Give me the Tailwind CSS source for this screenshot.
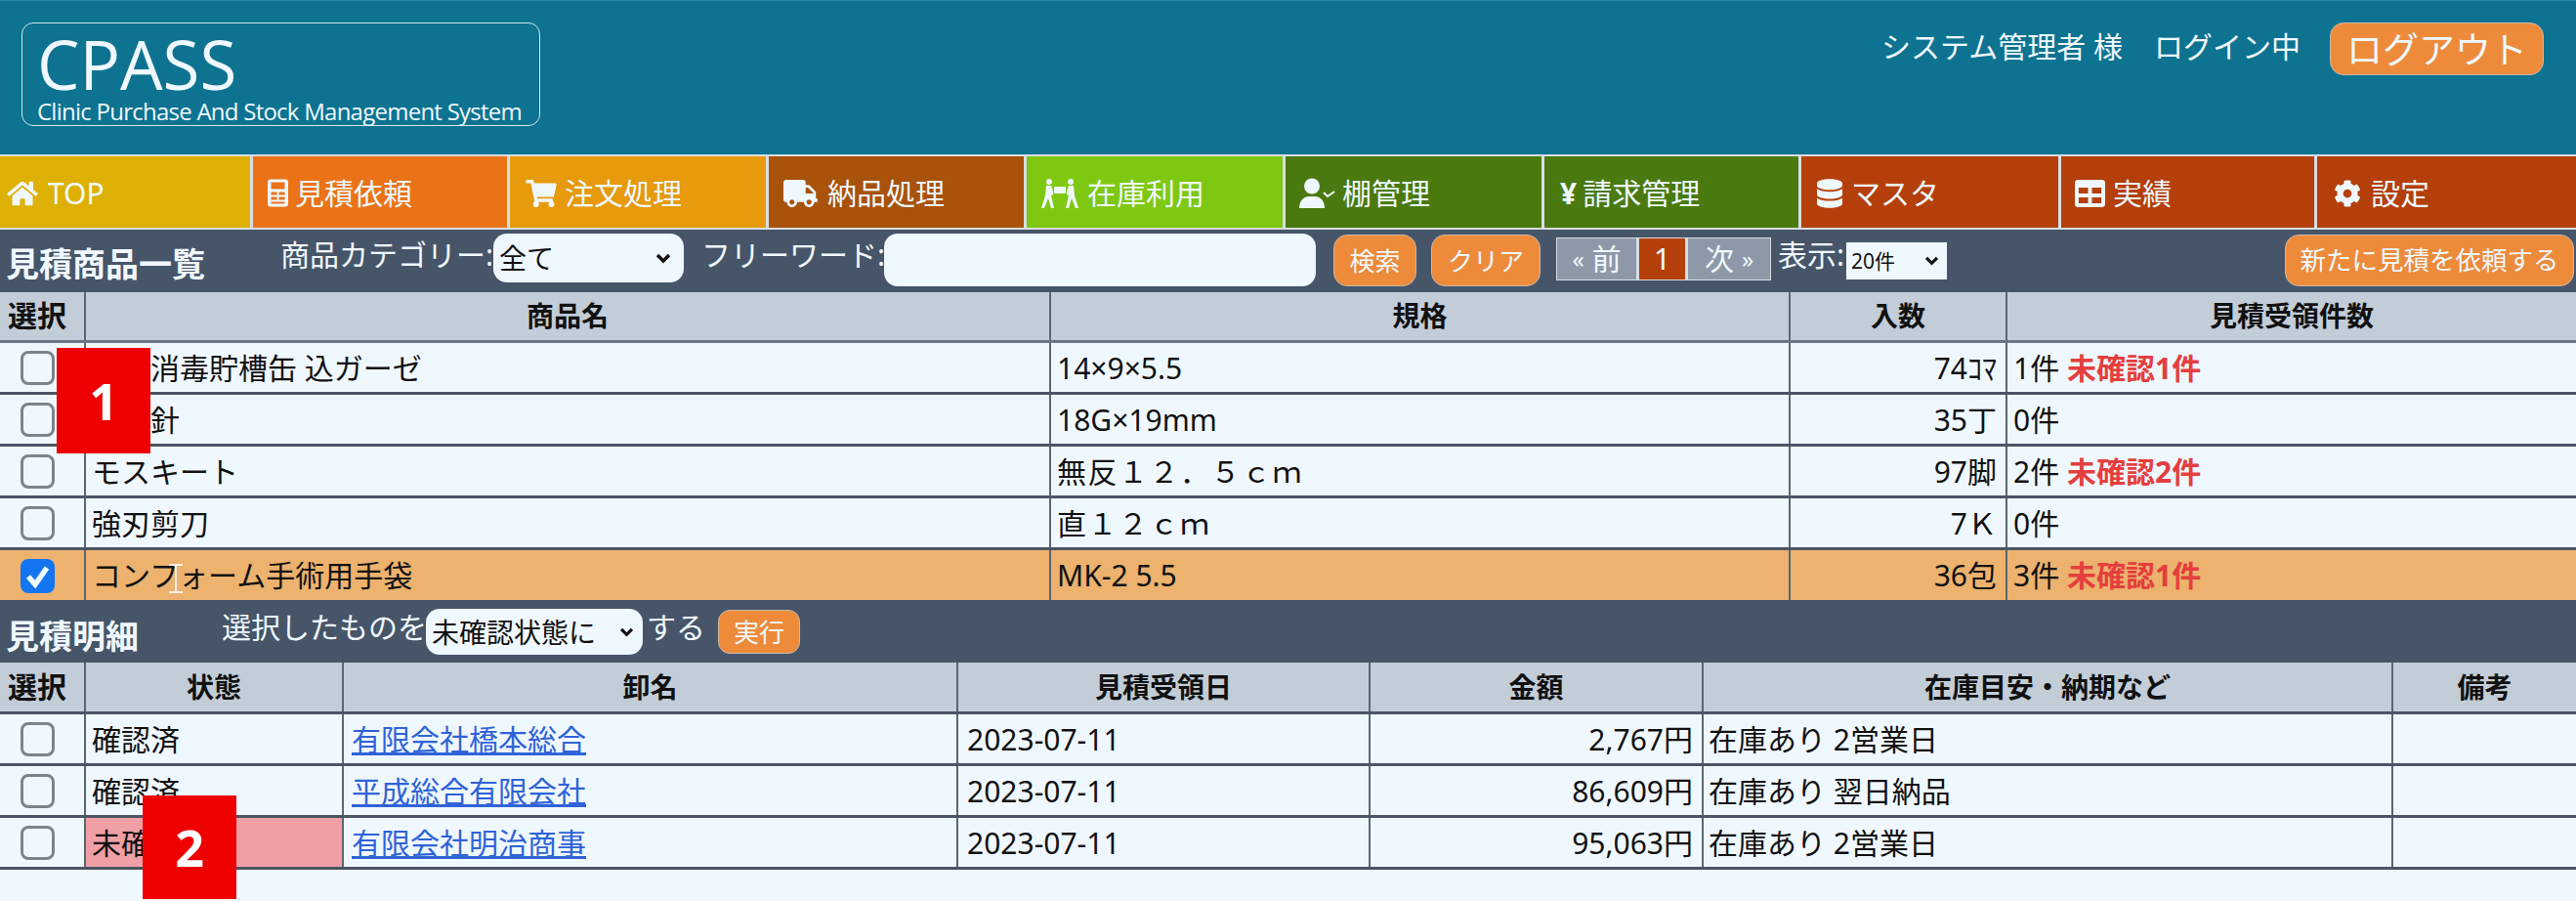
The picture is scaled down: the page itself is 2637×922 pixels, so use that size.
<!DOCTYPE html>
<html lang="ja">
<head>
  <meta charset="UTF-8" />
  <title>CPASS 見積商品一覧</title>
  <meta name="viewport" content="width=device-width, initial-scale=1.0" />
  <script src="https://cdn.jsdelivr.net/npm/@tailwindcss/browser@4"></script>
</head>
<body class="relative h-[922px] overflow-hidden bg-[#f0f8ff] text-[30px] leading-none text-[#111] font-['Noto_Sans','Noto_Sans_CJK_JP',sans-serif]">

  <!-- header -->
  <header class="flex h-[158px] items-start justify-between border-t border-[#2f8aa8] bg-[#0d7391] text-[#f0f8ff]">
    <div class="ml-[22px] mt-[22px] flex h-[106px] w-[531px] flex-col rounded-[12px] border border-[#d5e6ee] pl-[15px] font-['Open_Sans','Noto_Sans',sans-serif]">
      <div class="mt-[11px] h-[60px] text-[69px] leading-[60px]">CPASS</div>
      <div class="mt-[5px] text-[24px] leading-[28px] tracking-[-0.75px] whitespace-nowrap">Clinic Purchase And Stock Management System</div>
    </div>
    <div class="mt-[22px] mr-[33px] flex items-start">
      <span class="mt-[8px] text-[30px] leading-[34px] whitespace-nowrap">システム管理者 様</span>
      <span class="mt-[8px] ml-[32px] text-[30px] leading-[34px] whitespace-nowrap">ログイン中</span>
      <button class="ml-[30px] h-[54px] w-[219px] rounded-[14px] border border-[#c9b9a8] bg-[#ed8b3b] text-[37px] text-[#f0f8ff]">ログアウト</button>
    </div>
  </header>

  <!-- nav -->
  <nav class="flex h-[77px] gap-[3px] border-y-2 border-[#d8dde2] bg-[#d8dde2] text-[30px] text-[#f0f8ff] [&_a]:pt-[2px]">
    <a class="flex w-[256px] items-center gap-[10px] bg-[#deb004] pl-[7px]">
      <svg class="h-[28px] w-[32px]" viewBox="0 0 576 512" fill="currentColor"><path d="M280.37 148.26L96 300.11V464a16 16 0 0 0 16 16l112.06-.29a16 16 0 0 0 15.92-16V368a16 16 0 0 1 16-16h64a16 16 0 0 1 16 16v95.64a16 16 0 0 0 16 16.05L464 480a16 16 0 0 0 16-16V300L295.67 148.26a12.19 12.19 0 0 0-15.3 0zM571.6 251.47L488 182.56V44.05a12 12 0 0 0-12-12h-56a12 12 0 0 0-12 12v72.61L318.47 43a48 48 0 0 0-61 0L4.34 251.47a12 12 0 0 0-1.6 16.9l25.5 31A12 12 0 0 0 45.15 301l235.22-193.74a12.19 12.19 0 0 1 15.3 0L530.9 301a12 12 0 0 0 16.9-1.6l25.5-31a12 12 0 0 0-1.7-16.93z"/></svg>TOP</a>
    <a class="flex w-[260px] items-center gap-[7px] bg-[#ea7317] pl-[15px]">
      <svg class="h-[29px] w-[21px]" viewBox="0 0 21 28" fill="currentColor"><path fill-rule="evenodd" d="M3 0h15a3 3 0 0 1 3 3v22a3 3 0 0 1-3 3H3a3 3 0 0 1-3-3V3a3 3 0 0 1 3-3zM3.500 3v7h14V3zM3.500 13v3h6v-3zM11.500 13v3h6v-3zM3.500 18v3h6v-3zM11.500 18v3h6v-3zM3.500 23v2h14v-2z"/></svg>見積依頼</a>
    <a class="flex w-[262px] items-center gap-[8px] bg-[#e69a0c] pl-[16px]">
      <svg class="h-[28px] w-[32px]" viewBox="0 0 576 512" fill="currentColor"><path d="M528.12 301.319l47.273-208C578.806 78.301 567.391 64 551.99 64H159.208l-9.166-44.81C147.758 8.021 137.93 0 126.529 0H24C10.745 0 0 10.745 0 24v16c0 13.255 10.745 24 24 24h69.883l70.248 343.435C147.325 417.1 136 435.222 136 456c0 30.928 25.072 56 56 56s56-25.072 56-56c0-15.674-6.447-29.835-16.824-40h209.647C430.447 426.165 424 440.326 424 456c0 30.928 25.072 56 56 56s56-25.072 56-56c0-22.172-12.888-41.332-31.579-50.405l5.517-24.276c3.413-15.018-8.002-29.319-23.403-29.319H218.117l-6.545-32h293.145c11.206 0 20.92-7.754 23.403-18.681z"/></svg>注文処理</a>
    <a class="flex w-[261px] items-center gap-[10px] bg-[#a8520a] pl-[15px]">
      <svg class="h-[28px] w-[35px]" viewBox="0 0 640 512" fill="currentColor"><path d="M624 352h-16V243.900c0-12.700-5.100-24.900-14.100-33.900L494 110.100c-9-9-21.200-14.100-33.900-14.100H416V48c0-26.500-21.500-48-48-48H48C21.500 0 0 21.500 0 48v320c0 26.500 21.500 48 48 48h16c0 53 43 96 96 96s96-43 96-96h128c0 53 43 96 96 96s96-43 96-96h48c8.800 0 16-7.200 16-16v-32c0-8.800-7.200-16-16-16zM160 464c-26.500 0-48-21.500-48-48s21.500-48 48-48 48 21.500 48 48-21.500 48-48 48zm320 0c-26.500 0-48-21.500-48-48s21.500-48 48-48 48 21.500 48 48-21.500 48-48 48zm80-208H416V144h44.100l99.900 99.900V256z"/></svg>納品処理</a>
    <a class="flex w-[262px] items-center gap-[9px] bg-[#7ec812] pl-[15px]">
      <svg class="h-[30px] w-[38px]" viewBox="0 0 38 30" fill="currentColor"><circle cx="8" cy="3" r="3"/><circle cx="30" cy="3" r="3"/><rect x="13" y="8" width="12" height="7" rx="1"/><path d="M5 7h5l2 6v3l-2 1 3 13h-3l-3-10-4 10H0l4-13z"/><path d="M33 7h-5l-2 6v3l2 1-3 13h3l3-10 4 10h3l-4-13z"/></svg>在庫利用</a>
    <a class="flex w-[262px] items-center gap-[7px] bg-[#4a7a0f] pl-[14px]">
      <svg class="h-[31px] w-[37px]" viewBox="0 0 37 31" fill="currentColor"><circle cx="13" cy="8.500" r="8"/><path d="M0 31c0-8 5-12 10-12h6c5 0 10 4 10 12z"/><path d="M25 15l4 4 7-5" fill="none" stroke="currentColor" stroke-width="2"/></svg>棚管理</a>
    <a class="flex w-[260px] items-center gap-[6px] bg-[#4a7a0f] pl-[16px]"><span class="font-bold">¥</span>請求管理</a>
    <a class="flex w-[263px] items-center gap-[9px] bg-[#b43f0a] pl-[16px]">
      <svg class="h-[30px] w-[26px]" viewBox="0 0 448 512" fill="currentColor"><path d="M448 73.143v45.714C448 159.143 347.667 192 224 192S0 159.143 0 118.857V73.143C0 32.857 100.333 0 224 0s224 32.857 224 73.143zM448 176v102.857C448 319.143 347.667 352 224 352S0 319.143 0 278.857V176c48.125 33.143 136.208 48.572 224 48.572S399.874 209.143 448 176zm0 160v102.857C448 479.143 347.667 512 224 512S0 479.143 0 438.857V336c48.125 33.143 136.208 48.572 224 48.572S399.874 369.143 448 336z"/></svg>マスタ</a>
    <a class="flex w-[259px] items-center gap-[8px] bg-[#b43f0a] pl-[14px]">
      <svg class="h-[28px] w-[31px]" viewBox="0 32 512 448" preserveAspectRatio="none" fill="currentColor"><path d="M464 32H48C21.490 32 0 53.490 0 80v352c0 26.510 21.490 48 48 48h416c26.510 0 48-21.490 48-48V80c0-26.510-21.490-48-48-48zM224 416H64v-96h160v96zm0-160H64v-96h160v96zm224 160H288v-96h160v96zm0-160H288v-96h160v96z"/></svg>実績</a>
    <a class="flex flex-1 items-center gap-[10px] bg-[#b43f0a] pl-[17px]">
      <svg class="h-[30px] w-[28px]" viewBox="0 0 512 512" fill="currentColor"><path d="M487.400 315.700l-42.600-24.600c4.300-23.200 4.300-47 0-70.200l42.600-24.600c4.900-2.800 7.100-8.600 5.500-14-11.100-35.600-30-67.800-54.700-94.600-3.800-4.100-10-5.100-14.800-2.300L380.800 110c-17.900-15.400-38.500-27.300-60.800-35.100V25.800c0-5.600-3.900-10.500-9.400-11.700-36.700-8.200-74.300-7.800-109.200 0-5.500 1.200-9.400 6.100-9.400 11.700V75c-22.200 7.900-42.800 19.800-60.800 35.100L88.700 85.500c-4.900-2.800-11-1.900-14.800 2.300-24.700 26.700-43.600 58.900-54.700 94.600-1.700 5.400.6 11.200 5.500 14L67.300 221c-4.300 23.200-4.300 47 0 70.200l-42.600 24.600c-4.900 2.800-7.100 8.600-5.500 14 11.100 35.600 30 67.800 54.700 94.600 3.800 4.100 10 5.100 14.800 2.300l42.600-24.600c17.900 15.400 38.500 27.300 60.800 35.100v49.200c0 5.600 3.900 10.500 9.400 11.700 36.700 8.200 74.300 7.800 109.200 0 5.500-1.200 9.400-6.100 9.400-11.700v-49.200c22.200-7.900 42.800-19.800 60.800-35.100l42.600 24.600c4.900 2.800 11 1.900 14.800-2.300 24.700-26.700 43.600-58.900 54.700-94.600 1.500-5.500-.7-11.300-5.600-14.100zM256 336c-44.100 0-80-35.900-80-80s35.900-80 80-80 80 35.900 80 80-35.900 80-80 80z"/></svg>設定</a>
  </nav>

  <!-- list toolbar -->
  <div class="flex h-[64px] items-start bg-[#475569] text-[#f0f8ff] whitespace-nowrap">
    <h2 class="mt-[15px] ml-[6px] w-[281px] text-[34px] leading-[40px] font-bold">見積商品一覧</h2>
    <span class="mt-[8px] w-[218px] text-[30px] leading-[36px]">商品カテゴリー:</span>
    <div class="relative mt-[4px] h-[50px] w-[195px]">
      <select class="size-full appearance-none rounded-[14px] bg-[#f0f8ff] pl-[6px] text-[28px] text-[#111]"><option>全て</option></select>
      <svg class="absolute top-[20px] left-[166px] h-[11px] w-[16px]" viewBox="0 0 16 11" fill="none" stroke="#111" stroke-width="3.500"><path d="M2 2l6 6 6-6"/></svg>
    </div>
    <span class="mt-[8px] ml-[18px] w-[187px] text-[30px] leading-[36px]">フリーワード:</span>
    <input class="mt-[4px] h-[54px] w-[442px] rounded-[14px] bg-[#f0f8ff]" />
    <button class="mt-[5px] ml-[18px] h-[53px] w-[85px] rounded-[14px] border border-[#c9b9a8] bg-[#ed8b3b] text-[26px] text-[#f0f8ff]">検索</button>
    <button class="mt-[5px] ml-[15px] h-[53px] w-[112px] rounded-[14px] border border-[#c9b9a8] bg-[#ed8b3b] text-[26px] text-[#f0f8ff]">クリア</button>
    <div class="mt-[8px] ml-[16px] flex h-[44px] gap-[3px] border border-[#d8dde2] bg-[#d8dde2] text-[30px]">
      <span class="flex w-[81px] items-center justify-center gap-[8px] bg-[#8d99a8]"><span class="text-[24px]">«</span>前</span>
      <span class="flex w-[47px] items-center justify-center bg-[#b43f0a]">1</span>
      <span class="flex w-[84px] items-center justify-center gap-[8px] bg-[#8d99a8]">次<span class="text-[24px]">»</span></span>
    </div>
    <span class="mt-[8px] ml-[7px] w-[70px] text-[30px] leading-[36px]">表示:</span>
    <div class="relative mt-[13px] h-[38px] w-[103px]">
      <select class="size-full appearance-none bg-[#f0f8ff] pl-[5px] text-[21px] text-[#111]"><option>20件</option></select>
      <svg class="absolute top-[14px] left-[80px] h-[10px] w-[15px]" viewBox="0 0 16 11" fill="none" stroke="#111" stroke-width="3.500"><path d="M2 2l6 6 6-6"/></svg>
    </div>
    <button class="mt-[5px] ml-[346px] h-[53px] w-[296px] rounded-[14px] border border-[#c9b9a8] bg-[#ed8b3b] text-[26.500px] text-[#f0f8ff]">新たに見積を依頼する</button>
  </div>

  <!-- products -->
  <table class="w-full table-fixed border-collapse [&_td]:pt-[2px]">
    <colgroup><col class="w-[87px]" /><col class="w-[988px]" /><col class="w-[757px]" /><col class="w-[222px]" /><col /></colgroup>
    <thead class="bg-[#c2cdd8]">
      <tr class="h-[50px] border-b-[3px] border-[#6b7684] text-[28px] font-bold">
        <th class="border-r-2 border-[#5b6673] pl-[8px] text-left text-[30px]">選択</th>
        <th class="border-r-2 border-[#5b6673]">商品名</th>
        <th class="border-r-2 border-[#5b6673]">規格</th>
        <th class="border-r-2 border-[#5b6673]">入数</th>
        <th>見積受領件数</th>
      </tr>
    </thead>
    <tbody>
      <tr class="h-[53px] border-b-[3px] border-[#4b5563]">
        <td class="border-r-2 border-[#5b6673] pl-[21px]"><input type="checkbox" class="mt-[4px] size-[35px] appearance-none rounded-[8px] border-[3px] border-[#7c838c]" /></td>
        <td class="border-r-2 border-[#5b6673] pl-[6px]">滅菌消毒貯槽缶 込ガーゼ</td>
        <td class="border-r-2 border-[#5b6673] pl-[6px]">14×9×5.5</td>
        <td class="border-r-2 border-[#5b6673] pr-[9px] text-right">74ｺﾏ</td>
        <td class="pl-[6px]">1件 <span class="font-bold text-[#e53e3e]">未確認1件</span></td>
      </tr>
      <tr class="h-[53px] border-b-[3px] border-[#4b5563]">
        <td class="border-r-2 border-[#5b6673] pl-[21px]"><input type="checkbox" class="mt-[4px] size-[35px] appearance-none rounded-[8px] border-[3px] border-[#7c838c]" /></td>
        <td class="border-r-2 border-[#5b6673] pl-[6px]">注射針</td>
        <td class="border-r-2 border-[#5b6673] pl-[6px]">18G×19mm</td>
        <td class="border-r-2 border-[#5b6673] pr-[9px] text-right">35丁</td>
        <td class="pl-[6px]">0件</td>
      </tr>
      <tr class="h-[53px] border-b-[3px] border-[#4b5563]">
        <td class="border-r-2 border-[#5b6673] pl-[21px]"><input type="checkbox" class="mt-[4px] size-[35px] appearance-none rounded-[8px] border-[3px] border-[#7c838c]" /></td>
        <td class="border-r-2 border-[#5b6673] pl-[6px]">モスキート</td>
        <td class="border-r-2 border-[#5b6673] pl-[6px] tracking-[1.500px]">無反１２．５ｃｍ</td>
        <td class="border-r-2 border-[#5b6673] pr-[9px] text-right">97脚</td>
        <td class="pl-[6px]">2件 <span class="font-bold text-[#e53e3e]">未確認2件</span></td>
      </tr>
      <tr class="h-[53px] border-b-[3px] border-[#4b5563]">
        <td class="border-r-2 border-[#5b6673] pl-[21px]"><input type="checkbox" class="mt-[4px] size-[35px] appearance-none rounded-[8px] border-[3px] border-[#7c838c]" /></td>
        <td class="border-r-2 border-[#5b6673] pl-[6px]">強刃剪刀</td>
        <td class="border-r-2 border-[#5b6673] pl-[6px] tracking-[1.500px]">直１２ｃｍ</td>
        <td class="border-r-2 border-[#5b6673] pr-[9px] text-right">7Ｋ</td>
        <td class="pl-[6px]">0件</td>
      </tr>
      <tr class="h-[53px] bg-[#ecb26e]">
        <td class="border-r-2 border-[#5b6673] pl-[21px]">
          <span class="relative mt-[4px] inline-block size-[35px]">
            <input type="checkbox" checked class="size-full appearance-none rounded-[8px] bg-[#1375f0]" />
            <svg class="absolute inset-0 size-full" viewBox="0 0 35 35" fill="none" stroke="#f0f8ff" stroke-width="5.500"><path d="M8 18l7 8 12-17"/></svg>
          </span>
        </td>
        <td class="border-r-2 border-[#5b6673] pl-[6px]">コンフォーム手術用手袋</td>
        <td class="border-r-2 border-[#5b6673] pl-[6px]">MK-2 5.5</td>
        <td class="border-r-2 border-[#5b6673] pr-[9px] text-right">36包</td>
        <td class="pl-[6px]">3件 <span class="font-bold text-[#e53e3e]">未確認1件</span></td>
      </tr>
    </tbody>
  </table>

  <!-- detail toolbar -->
  <div class="flex h-[64px] items-start bg-[#475569] text-[#f0f8ff] whitespace-nowrap">
    <h2 class="mt-[17px] ml-[6px] w-[221px] text-[34px] leading-[40px] font-bold">見積明細</h2>
    <span class="mt-[10px] w-[209px] text-[30px] leading-[36px]">選択したものを</span>
    <div class="relative mt-[9px] h-[47px] w-[222px]">
      <select class="size-full appearance-none rounded-[14px] bg-[#f0f8ff] pl-[6px] text-[28px] text-[#111]"><option>未確認状態に</option></select>
      <svg class="absolute top-[19px] left-[198px] h-[10px] w-[15px]" viewBox="0 0 16 11" fill="none" stroke="#111" stroke-width="3.500"><path d="M2 2l6 6 6-6"/></svg>
    </div>
    <span class="mt-[10px] ml-[4px] w-[73px] text-[30px] leading-[36px]">する</span>
    <button class="mt-[10px] h-[45px] w-[84px] rounded-[12px] border border-[#c9b9a8] bg-[#ed8b3b] text-[26px] text-[#f0f8ff]">実行</button>
  </div>

  <!-- details -->
  <table class="w-full table-fixed border-collapse [&_td]:pt-[2px]">
    <colgroup><col class="w-[87px]" /><col class="w-[264px]" /><col class="w-[629px]" /><col class="w-[422px]" /><col class="w-[341px]" /><col class="w-[706px]" /><col /></colgroup>
    <thead class="bg-[#c2cdd8]">
      <tr class="h-[51px] border-b-[3px] border-[#4b5563] text-[28px] font-bold">
        <th class="border-r-2 border-[#5b6673] pl-[8px] text-left text-[30px]">選択</th>
        <th class="border-r-2 border-[#5b6673]">状態</th>
        <th class="border-r-2 border-[#5b6673]">卸名</th>
        <th class="border-r-2 border-[#5b6673]">見積受領日</th>
        <th class="border-r-2 border-[#5b6673]">金額</th>
        <th class="border-r-2 border-[#5b6673]">在庫目安・納期など</th>
        <th>備考</th>
      </tr>
    </thead>
    <tbody>
      <tr class="h-[53px] border-b-[3px] border-[#4b5563]">
        <td class="border-r-2 border-[#5b6673] pl-[21px]"><input type="checkbox" class="mt-[4px] size-[35px] appearance-none rounded-[8px] border-[3px] border-[#7c838c]" /></td>
        <td class="border-r-2 border-[#5b6673] pl-[6px]">確認済</td>
        <td class="border-r-2 border-[#5b6673] pl-[8px]"><a class="text-[#2f63d8] underline">有限会社橋本総合</a></td>
        <td class="border-r-2 border-[#5b6673] pl-[9px]">2023-07-11</td>
        <td class="border-r-2 border-[#5b6673] pr-[9px] text-right">2,767円</td>
        <td class="border-r-2 border-[#5b6673] pl-[5px]">在庫あり 2営業日</td>
        <td></td>
      </tr>
      <tr class="h-[53px] border-b-[3px] border-[#4b5563]">
        <td class="border-r-2 border-[#5b6673] pl-[21px]"><input type="checkbox" class="mt-[4px] size-[35px] appearance-none rounded-[8px] border-[3px] border-[#7c838c]" /></td>
        <td class="border-r-2 border-[#5b6673] pl-[6px]">確認済</td>
        <td class="border-r-2 border-[#5b6673] pl-[8px]"><a class="text-[#2f63d8] underline">平成総合有限会社</a></td>
        <td class="border-r-2 border-[#5b6673] pl-[9px]">2023-07-11</td>
        <td class="border-r-2 border-[#5b6673] pr-[9px] text-right">86,609円</td>
        <td class="border-r-2 border-[#5b6673] pl-[5px]">在庫あり 翌日納品</td>
        <td></td>
      </tr>
      <tr class="h-[53px] border-b-[3px] border-[#4b5563]">
        <td class="border-r-2 border-[#5b6673] pl-[21px]"><input type="checkbox" class="mt-[4px] size-[35px] appearance-none rounded-[8px] border-[3px] border-[#7c838c]" /></td>
        <td class="border-r-2 border-[#5b6673] bg-[#ef9fa5] pl-[6px]">未確認</td>
        <td class="border-r-2 border-[#5b6673] pl-[8px]"><a class="text-[#2f63d8] underline">有限会社明治商事</a></td>
        <td class="border-r-2 border-[#5b6673] pl-[9px]">2023-07-11</td>
        <td class="border-r-2 border-[#5b6673] pr-[9px] text-right">95,063円</td>
        <td class="border-r-2 border-[#5b6673] pl-[5px]">在庫あり 2営業日</td>
        <td></td>
      </tr>
    </tbody>
  </table>

  <!-- callout markers and mouse cursor over the table -->
  <div class="absolute top-[356px] left-[58px] flex h-[108px] w-[96px] items-center justify-center bg-[#ee0000] text-[52px] font-bold text-white">1</div>
  <div class="absolute top-[814px] left-[146px] flex h-[106px] w-[96px] items-center justify-center bg-[#ee0000] text-[52px] font-bold text-white">2</div>
  <svg class="absolute top-[577px] left-[173px] h-[30px] w-[14px]" viewBox="0 0 14 30" fill="none" stroke="#f5efe6" stroke-width="2"><path d="M0 1h14M0 29h14M7 1v28"/></svg>
</body>
</html>
